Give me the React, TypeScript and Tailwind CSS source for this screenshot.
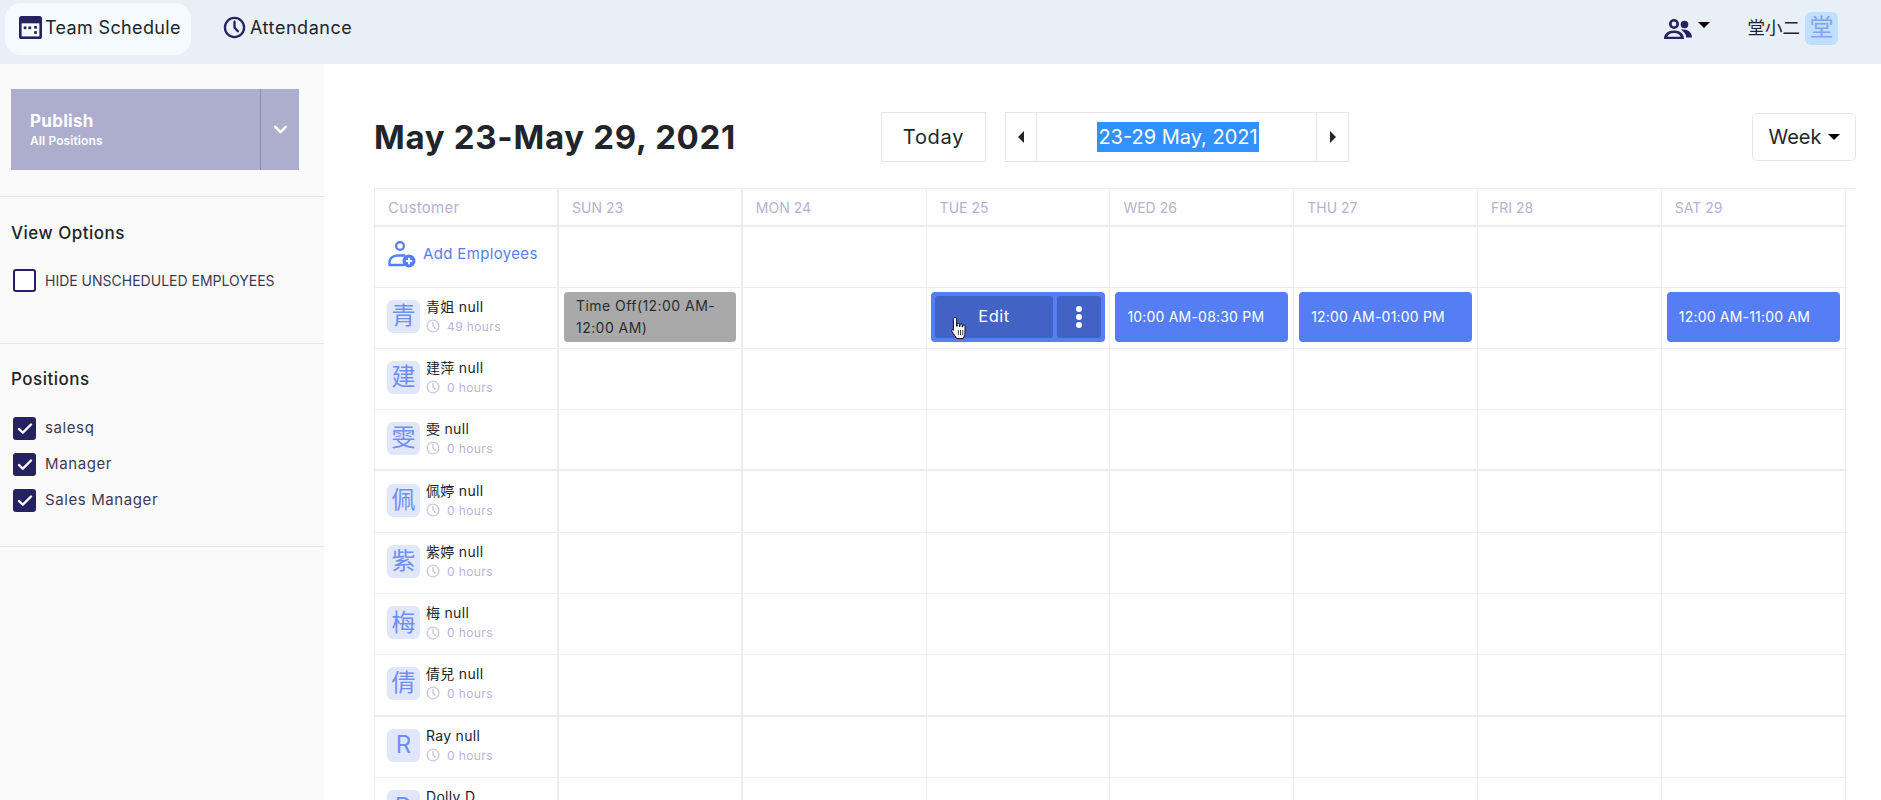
import React from 'react';
import { Check, ChevronDown } from 'lucide-react';

const days = ['SUN 23', 'MON 24', 'TUE 25', 'WED 26', 'THU 27', 'FRI 28', 'SAT 29'];

const employees = [
  { mark: '青', name: '青姐 null', hours: '49 hours' },
  { mark: '建', name: '建萍 null', hours: '0 hours' },
  { mark: '雯', name: '雯 null', hours: '0 hours' },
  { mark: '佩', name: '佩婷 null', hours: '0 hours', thick: true },
  { mark: '紫', name: '紫婷 null', hours: '0 hours' },
  { mark: '梅', name: '梅 null', hours: '0 hours' },
  { mark: '倩', name: '倩兒 null', hours: '0 hours' },
  { mark: 'R', name: 'Ray null', hours: '0 hours', thick: true },
  { mark: 'D', name: 'Dolly D', hours: '0 hours' },
];

function Caret({ className = '' }: { className?: string }) {
  return (
    <svg viewBox="0 0 12 6" className={className} fill="currentColor">
      <path d="M0 0h12L6 6z" />
    </svg>
  );
}

function ClockIcon({ className = '' }: { className?: string }) {
  return (
    <svg viewBox="0 0 24 24" className={className} fill="none" stroke="currentColor" strokeWidth="2.4" strokeLinecap="round">
      <circle cx="12" cy="12" r="10" />
      <path d="M12 6v6l3.5 4" />
    </svg>
  );
}

function CalendarIcon() {
  return (
    <svg viewBox="0 0 22 22" className="w-[23px] h-[23px]">
      <rect width="22" height="22" rx="2.5" fill="#25225f" />
      <rect x="2.5" y="7" width="17" height="12.5" fill="#f5faff" />
      <rect x="4.5" y="10" width="2.6" height="2.6" fill="#25225f" />
      <rect x="9" y="10" width="2.6" height="2.6" fill="#25225f" />
      <rect x="14.5" y="9.5" width="2.6" height="2.6" fill="#25225f" />
      <rect x="14.5" y="14.5" width="2.6" height="2.6" fill="#25225f" />
    </svg>
  );
}

function PeopleIcon() {
  return (
    <svg viewBox="0 0 28 21" className="w-[28px] h-[21px]" fill="#25225f">
      <path fillRule="evenodd" d="M10 1a5 5 0 1 1 0 10 5 5 0 0 1 0-10zm0 2.6a2.4 2.4 0 1 0 0 4.8 2.4 2.4 0 0 0 0-4.8z" />
      <path fillRule="evenodd" d="M0 21c0-5.5 4-8.5 10-8.5S20 15.500 20 21H0zm3.300-2.200h13.400C15.900 16.300 13.500 15 10 15s-5.900 1.300-6.700 3.800z" />
      <circle cx="20.500" cy="6.500" r="3.800" />
      <path d="M17 11.800c5.500-1 11 1.700 11 7.700h-5.800c0-3-2-5.700-5.200-7.700z" />
    </svg>
  );
}

function AddEmployeeIcon() {
  return (
    <svg viewBox="0 0 28 27" className="w-[28px] h-[27px]" fill="none">
      <circle cx="12" cy="5" r="3.900" stroke="#557ef5" strokeWidth="2.200" />
      <path d="M1.500 24v-2.500c0-4.500 4-7 9-7h6M1.500 24h14" stroke="#557ef5" strokeWidth="2.400" strokeLinecap="round" />
      <circle cx="21" cy="20" r="6.500" fill="#557ef5" />
      <path d="M21 16.800v6.400M17.800 20h6.400" stroke="#fff" strokeWidth="2" />
    </svg>
  );
}

function HandCursor() {
  return (
    <svg viewBox="0 0 18 24" className="absolute left-[19px] top-[24px] w-[18px] h-[24px]">
      <path
        d="M5 1.500c1 0 1.600.7 1.600 1.700v7l.6.1V8.300c0-1.500 2.200-1.500 2.200 0v2.200l.6.100V9c0-1.500 2.200-1.500 2.200 0v2l.5.100v-1c0-1.400 2.300-1.400 2.300 0v6.500c0 2.700-1.200 3.900-1.700 5.900H6.500c-.6-2-2.700-3.900-4.500-7-.8-1.400.6-2.800 1.900-1.500l-.5.2V3.200c0-1 .7-1.700 1.600-1.700z"
        fill="#fff"
        stroke="#111"
        strokeWidth="1"
      />
      <path d="M8.300 14v5M10.500 14v5M12.800 14v5" stroke="#111" strokeWidth="0.800" />
    </svg>
  );
}

function Box({ checked, label, wide }: { checked: boolean; label: string; wide?: boolean }) {
  return (
    <div className="flex items-center gap-[9px]">
      {checked ? (
        <span className="flex items-center justify-center w-[23px] h-[23px] rounded-[3px] bg-[#25225f]">
          <Check className="w-[18px] h-[18px] text-white" strokeWidth={3.2} />
        </span>
      ) : (
        <span className="w-[23px] h-[23px] rounded-[3px] border-[2px] border-[#25225f] bg-white" />
      )}
      <span className={wide ? 'text-[15px] tracking-[0.6px] text-[#3c3a52]' : 'text-[14px] text-[#3c3a52]'}>{label}</span>
    </div>
  );
}

function ShiftCell({ day, row }: { day: number; row: number }) {
  if (row !== 0) return null;
  if (day === 0) {
    return (
      <div className="h-[50px] rounded-[4px] bg-[#a9a9a9] pl-[12px] pr-2 text-[14px] tracking-[0.45px] leading-[22px] pt-[3px] text-[#2b2b33]">
        Time Off(12:00 AM-12:00 AM)
      </div>
    );
  }
  if (day === 2) {
    return (
      <div className="relative -mx-px flex h-[50px] gap-[4px] rounded-[4px] bg-[#557ef5] p-[4px] text-white">
        <div className="flex flex-1 items-center justify-center rounded-[3px] bg-[#4262c6] text-[16.500px] tracking-[0.5px]">Edit</div>
        <div className="flex w-[44px] flex-col items-center justify-center gap-[2px] rounded-[3px] bg-[#4262c6]">
          <span className="h-[6px] w-[6px] rounded-full bg-white" />
          <span className="h-[6px] w-[6px] rounded-full bg-white" />
          <span className="h-[6px] w-[6px] rounded-full bg-white" />
        </div>
        <HandCursor />
      </div>
    );
  }
  const labels: Record<number, string> = {
    3: '10:00 AM-08:30 PM',
    4: '12:00 AM-01:00 PM',
    6: '12:00 AM-11:00 AM',
  };
  if (!labels[day]) return null;
  return (
    <div className="flex h-[50px] items-center rounded-[4px] bg-[#557ef5] pl-[12px] text-[14px] tracking-[0.2px] text-white">
      {labels[day]}
    </div>
  );
}

export default function App() {
  return (
    <div className="h-[800px] overflow-hidden bg-white text-[#212529] font-['Inter','Noto_Sans_CJK_TC',sans-serif]">
      <header className="flex h-[64px] items-start bg-[#e8eff7] pl-[5px] pr-[43px] pt-[3px]">
        <div className="flex h-[52px] w-[186px] items-center gap-[3px] rounded-[16px] bg-[#f5faff] pl-[14px] pb-[4px] text-[18px] tracking-[0.35px]">
          <CalendarIcon />
          <span>Team Schedule</span>
        </div>
        <div className="ml-[32px] flex h-[52px] items-center gap-[4px] pb-[4px] text-[18px] tracking-[0.55px]">
          <ClockIcon className="h-[23px] w-[23px] text-[#25225f]" />
          <span>Attendance</span>
        </div>
        <div className="ml-auto flex h-[50px] items-center">
          <PeopleIcon />
          <Caret className="ml-[6px] mb-[6px] h-[6px] w-[12px] text-black" />
          <span className="ml-[38px] text-[17.500px]">堂小二</span>
          <span className="ml-[5px] flex h-[33px] w-[33px] items-center justify-center rounded-[6px] bg-[#bfdffc] text-[24px] text-[#86a4f7]">堂</span>
        </div>
      </header>

      <div className="flex h-[736px]">
        <aside className="w-[324px] shrink-0 bg-[#fafafa]">
          <div className="border-b border-[#e5e5ee] pl-[11px] pr-[25px] pt-[25px] pb-[26px]">
            <div className="flex h-[81px] bg-[#adadcd] text-white">
              <div className="flex flex-1 flex-col justify-center pl-[19px] border-r border-[#8c8cac]">
                <span className="text-[17px] font-bold tracking-[0.3px] leading-[22px]">Publish</span>
                <span className="text-[12px] font-semibold tracking-[0.1px] leading-[17px]">All Positions</span>
              </div>
              <div className="flex w-[38px] items-center justify-center">
                <ChevronDown className="h-[21px] w-[21px]" strokeWidth={3} />
              </div>
            </div>
          </div>
          <div className="h-[147px] border-b border-[#e5e5ee] pl-[11px] pt-[24px]">
            <h3 className="text-[17px] font-medium tracking-[0.5px] leading-[24px]">View Options</h3>
            <div className="mt-[24px] pl-[2px]">
              <Box checked={false} label="HIDE UNSCHEDULED EMPLOYEES" />
            </div>
          </div>
          <div className="h-[203px] border-b border-[#e5e5ee] pl-[11px] pt-[23px]">
            <h3 className="text-[17px] font-medium tracking-[0.5px] leading-[24px]">Positions</h3>
            <div className="mt-[26px] flex flex-col gap-[13px] pl-[2px]">
              <Box checked wide label="salesq" />
              <Box checked wide label="Manager" />
              <Box checked wide label="Sales Manager" />
            </div>
          </div>
        </aside>

        <main className="flex-1 pl-[50px] pr-[25px] pt-[48px]">
          <div className="flex h-[50px] items-center">
            <h1 className="w-[507px] pt-[2px] text-[33px] font-bold tracking-[0.7px]">May 23-May 29, 2021</h1>
            <div className="flex h-[50px] w-[105px] items-center justify-center border-[1.5px] border-[#e5e5ee] text-[20px] tracking-[0.7px]">Today</div>
            <div className="ml-[19px] flex h-[50px] w-[344px] items-center border-[1.5px] border-[#e5e5ee]">
              <span className="flex h-full w-[31px] items-center justify-center border-r border-[#e5e5ee]">
                <Caret className="h-[12px] w-[12px] rotate-90 text-[#212529]" />
              </span>
              <span className="flex flex-1 justify-center pl-[3px] text-[20px] text-white">
                <span className="flex h-[30px] items-center bg-[#3390ff] px-px">23-29 May, 2021</span>
              </span>
              <span className="flex h-full w-[32px] items-center justify-center border-l border-[#e5e5ee]">
                <Caret className="h-[12px] w-[12px] -rotate-90 text-[#212529]" />
              </span>
            </div>
            <div className="ml-auto flex h-[48px] w-[104px] items-center justify-center gap-[6px] rounded-[5px] border-[1.5px] border-[#e5e5ee] text-[20px]">
              Week
              <Caret className="h-[6px] w-[12px] text-black" />
            </div>
          </div>

          <div className="mt-[26px] border-t border-[#ebebf3]">
            <div className="flex h-[37.500px] w-[1473px] border-b-2 border-[#ebebf3] text-[14px] text-[#b5b2d0]">
              <div className="flex w-[185px] items-center border-x-2 border-l-[1px] border-[#ebebf3] pl-[13px] pt-[2px] text-[15px] tracking-[0.3px]">Customer</div>
              {days.map((d, i) => (
                <div key={d} className={`flex w-[183.800px] items-center pl-[13px] pt-[2px] border-r border-[#ebebf3] ${i === 0 ? 'border-r-2' : ''}`}>
                  {d}
                </div>
              ))}
            </div>

            <div className="flex h-[61px] w-[1473px] border-b border-[#ebebf3]">
              <div className="flex w-[185px] items-center gap-[7px] border-x-2 border-l-[1px] border-[#ebebf3] pl-[13px] pb-[4px]">
                <AddEmployeeIcon />
                <span className="text-[15px] tracking-[0.35px] text-[#557ef5]">Add Employees</span>
              </div>
              {days.map((d, i) => (
                <div key={d} className={`w-[183.800px] border-r border-[#ebebf3] ${i === 0 ? 'border-r-2' : ''}`} />
              ))}
            </div>

            {employees.map((emp, row) => (
              <div
                key={emp.mark}
                className={`flex h-[61.3px] w-[1473px] border-[#ebebf3] ${employees[row + 1]?.thick ? 'border-b-2' : 'border-b'}`}
              >
                <div className="flex w-[185px] items-center gap-[6px] border-x-2 border-l-[1px] border-[#ebebf3] pl-[12px] pb-[3px]">
                  <span className="flex h-[33px] w-[33px] shrink-0 items-center justify-center rounded-[6px] bg-[#e1e7fb] text-[24px] text-[#6f8ff5]">
                    {emp.mark}
                  </span>
                  <div className="flex flex-col">
                    <span className="text-[14px] tracking-[0.3px] leading-[20px]">{emp.name}</span>
                    <span className="flex items-center gap-[7px] text-[12px] tracking-[0.4px] leading-[19px] text-[#b9b5d4]">
                      <ClockIcon className="h-[14px] w-[14px] text-[#cbc9dd]" />
                      {emp.hours}
                    </span>
                  </div>
                </div>
                {days.map((d, i) => (
                  <div key={d} className={`w-[183.800px] border-r border-[#ebebf3] px-[5px] pt-[4px] ${i === 0 ? 'border-r-2' : ''}`}>
                    <ShiftCell day={i} row={row} />
                  </div>
                ))}
              </div>
            ))}
          </div>
        </main>
      </div>
    </div>
  );
}
